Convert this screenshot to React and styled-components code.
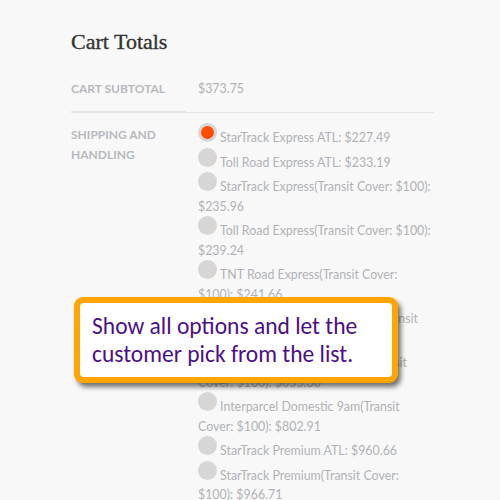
import React from 'react'
import styled, { createGlobalStyle } from 'styled-components';

const GlobalStyle = createGlobalStyle`
  html, body {
    margin: 0;
    padding: 0;
    background: #f8f8f8;
    overflow: hidden;
  }
`;

const StyledPage = styled.div`
  position: relative;
  width: 500px;
  height: 500px;
  box-sizing: border-box;
  padding: 30px 66px 0 71px;
  background: #f8f8f8;
  font-family: Lato, "Open Sans", sans-serif;
  overflow: hidden;
`;

const StyledTitle = styled.h2`
  margin: 0 0 13px;
  font-family: "Liberation Serif", serif;
  font-weight: 400;
  font-size: 22px;
  line-height: 24px;
  color: #333;
  -webkit-text-stroke: 0.35px #333;
`;

const StyledTable = styled.div`
  display: grid;
  grid-template-columns: 115px 1fr;
`;

const StyledLabel = styled.div`
  padding: ${p => p.$first ? '12px 0' : '12px 0'};
  border-bottom: ${p => p.$last ? 'none' : '2px solid #e6e6e6'};
  font-weight: 700;
  font-size: 12px;
  line-height: 20px;
  text-transform: uppercase;
  color: #b7b9be;
`;

const StyledValue = styled.div`
  padding: ${p => p.$last ? '10px' : '12px'} 0 12px 12px;
  border-bottom: ${p => p.$last ? 'none' : '1px solid #e6e6e6'};
  font-size: 12.4px;
  line-height: 20px;
  color: #b0b2b7;
`;

const StyledOption = styled.label`
  display: block;
  font-size: 12.4px;
  line-height: 19.5px;
  color: #b0b2b7;
`;

const StyledRadio = styled.span`
  display: inline-block;
  box-sizing: border-box;
  width: 19px;
  height: 19px;
  margin-right: 3px;
  border-radius: 50%;
  background: ${p => p.$checked ? '#ff4d00' : '#d8d5d5'};
  border: ${p => p.$checked ? '3px solid #d8d5d5' : 'none'};
  vertical-align: baseline;
`;

const StyledCallout = styled.div`
  position: absolute;
  left: 74px;
  top: 297px;
  width: 324px;
  box-sizing: border-box;
  padding: 6px;
  border-radius: 9px;
  background: #ffa500;
  box-shadow: 3px 4px 5px rgba(0, 0, 0, 0.55);
`;

const StyledCalloutInner = styled.div`
  padding: 9px 8px 9px 12px;
  border-radius: 4px;
  background: #fff;
  font-family: Carlito, Lato, "Open Sans", sans-serif;
  font-size: 23.5px;
  line-height: 28px;
  color: #4b0f87;
`;

const options = [
  'StarTrack Express ATL: $227.49',
  'Toll Road Express ATL: $233.19',
  'StarTrack Express(Transit Cover: $100): $235.96',
  'Toll Road Express(Transit Cover: $100): $239.24',
  'TNT Road Express(Transit Cover: $100): $241.66',
  'Interparcel Domestic Express(Transit Cover: $100): $512.40',
  'Interparcel Domestic 10am(Transit Cover: $100): $655.30',
  'Interparcel Domestic 9am(Transit Cover: $100): $802.91',
  'StarTrack Premium ATL: $960.66',
  'StarTrack Premium(Transit Cover: $100): $966.71',
  'Interparcel Domestic 9am ATL: $1,010.45',
];

const App = () => {
  return (<StyledPage>
    <GlobalStyle />
    <StyledTitle>Cart Totals</StyledTitle>
    <StyledTable>
      <StyledLabel $first>Cart Subtotal</StyledLabel>
      <StyledValue>$373.75</StyledValue>
      <StyledLabel $last>Shipping and Handling</StyledLabel>
      <StyledValue $last>
        {options.map((o, i) => (
          <StyledOption key={o}>
            <StyledRadio $checked={i === 0} />{o}
          </StyledOption>
        ))}
      </StyledValue>
    </StyledTable>
    <StyledCallout>
      <StyledCalloutInner>
        Show all options and let the customer pick from the list.
      </StyledCalloutInner>
    </StyledCallout>
  </StyledPage>)
}

export default App;
